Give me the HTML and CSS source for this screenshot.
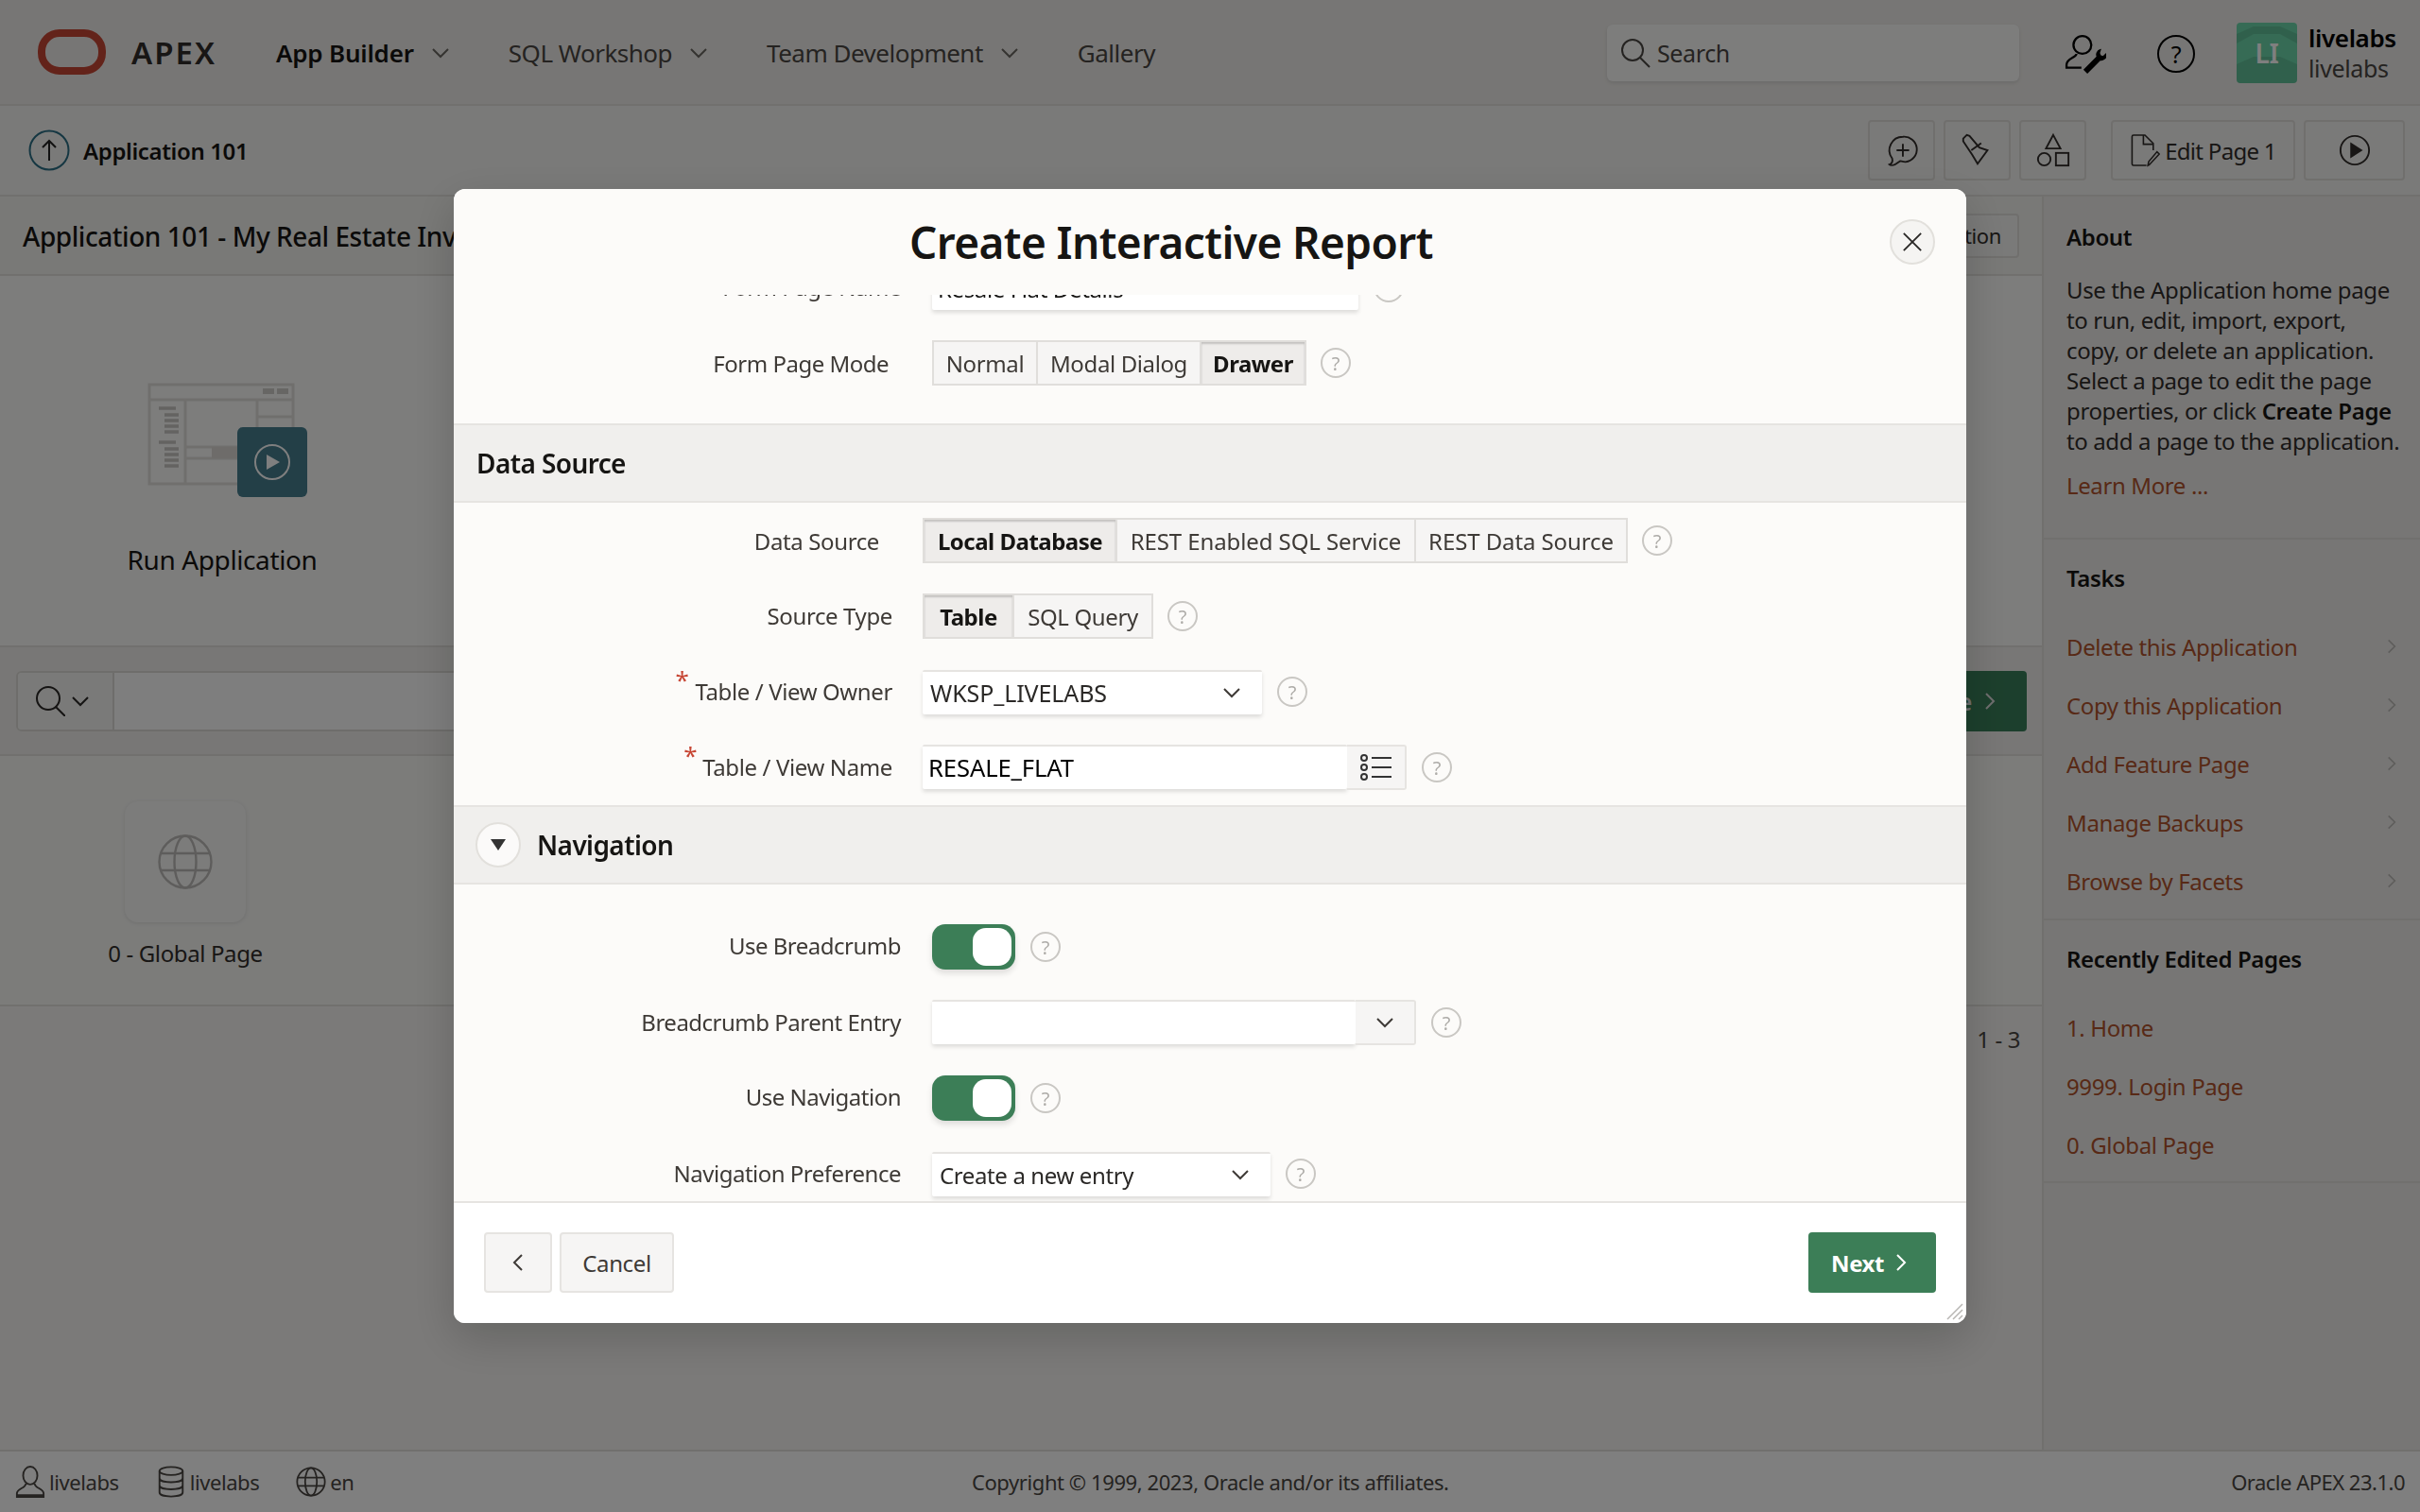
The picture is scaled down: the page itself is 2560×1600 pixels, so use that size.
FILE: index.html
```html
<!DOCTYPE html>
<html lang="en">
<head>
<meta charset="utf-8">
<title>Create Interactive Report</title>
<link rel="stylesheet" href="styles.css">
</head>
<body>
<svg class="defs" width="0" height="0">
  <symbol id="chev-down" viewBox="0 0 20 12"><path d="M2 2l8 8 8-8" fill="none" stroke="currentColor" stroke-width="2"/></symbol>
  <symbol id="chev-right" viewBox="0 0 12 20"><path d="M2 2l8 8-8 8" fill="none" stroke="currentColor" stroke-width="2"/></symbol>
  <symbol id="chev-left" viewBox="0 0 12 20"><path d="M10 2L2 10l8 8" fill="none" stroke="currentColor" stroke-width="2"/></symbol>
</svg>

<div class="page">
  <header class="topbar">
    <svg class="logo" viewBox="0 0 72 48"><rect x="4" y="4" width="64" height="40" rx="19" fill="none" stroke="#c74634" stroke-width="8"/></svg>
    <span class="brand">APEX</span>
    <nav class="mainnav">
      <a class="navitem active">App Builder<svg class="chev"><use href="#chev-down"/></svg></a>
      <a class="navitem">SQL Workshop<svg class="chev"><use href="#chev-down"/></svg></a>
      <a class="navitem">Team Development<svg class="chev"><use href="#chev-down"/></svg></a>
      <a class="navitem">Gallery</a>
    </nav>
    <div class="globalsearch">
      <svg class="icon32" viewBox="0 0 32 32" fill="none" stroke="currentColor" stroke-width="2"><circle cx="13" cy="13" r="11"/><path d="M21 21l10 10"/></svg>
      <span>Search</span>
    </div>
    <svg class="usertool" viewBox="0 0 42 42" fill="none" stroke="#000" stroke-width="2.2"><circle cx="18" cy="11" r="9"/><path d="M12 20c0 4-10 4-10 11v3h15"/><path d="M36 16a5 5 0 0 0-3 7l-13 13 3 3 13-13a5 5 0 0 0 6-6l-3 3-3-1-1-3z" fill="#000" stroke-width="1.4"/></svg>
    <div class="helpbig">?</div>
    <div class="avatar"><svg class="avatarart" viewBox="0 0 64 64"><path d="M0 12L18 4h28l18 8v10L46 12H18L0 22zM0 44l18-8h28l18 8v20H0z" fill="#000" opacity=".1"/></svg><span class="avatartext">LI</span></div>
    <div class="userinfo"><b>livelabs</b><span>livelabs</span></div>
  </header>

  <div class="crumbbar">
    <svg class="upicon" viewBox="0 0 44 44" fill="none"><circle cx="22" cy="22" r="20.5" stroke="#2b6e85" stroke-width="2"/><path d="M22 33V12M15 19l7-7 7 7" stroke="#222" stroke-width="2"/></svg>
    <span class="crumbtext">Application 101</span>
    <div class="toolgroup">
      <button class="toolbtn iconbtn"><svg viewBox="0 0 40 40" class="icon40" fill="none" stroke="currentColor" stroke-width="2"><path d="M21 5a14 14 0 0 1 3 28c-3 0-5-1-6-1l-6 4c-2 1-5 1-6 0 3-1 4-4 3-7a15 15 0 0 1 12-24z"/><path d="M21 13v14M14 20h14"/></svg></button>
      <button class="toolbtn iconbtn"><svg viewBox="0 0 40 40" class="icon40" fill="none" stroke="currentColor" stroke-width="2"><path d="M4 7l4-4 3 1 11 13 9 3-11 15-6-10-10-15z"/><path d="M13 20l11-8"/></svg></button>
      <button class="toolbtn iconbtn"><svg viewBox="0 0 40 40" class="icon40" fill="none" stroke="currentColor" stroke-width="2"><path d="M20 3l8 15H12z"/><circle cx="10" cy="30" r="7"/><rect x="23" y="23" width="14" height="14"/></svg></button>
      <button class="toolbtn editbtn"><svg viewBox="0 0 40 44" class="iconfile" fill="none" stroke="currentColor" stroke-width="2"><path d="M22 42H5a2 2 0 0 1-2-2V4a2 2 0 0 1 2-2h15l11 11v9"/><path d="M18 2v12h12"/><path d="M26 41l-2 1 1-5 11-13 3 3z"/></svg>Edit Page 1</button>
      <button class="toolbtn runbtn"><svg viewBox="0 0 36 36" class="icon36" fill="none" stroke="currentColor" stroke-width="2"><circle cx="18" cy="18" r="16"/><path d="M13 9l14 9-14 9z" fill="currentColor" stroke="none"/></svg></button>
    </div>
  </div>

  <div class="mainwrap">
    <main class="content">
      <div class="titlebar">
        <h1>Application 101 - My Real Estate Investment</h1>
        <button class="toolbtn defbtn">Edit Application Definition</button>
      </div>
      <section class="hero">
        <div class="herotile">
          <svg class="runart" viewBox="0 0 170 122">
            <rect x="2" y="2" width="152" height="105" fill="none" stroke="#e0dedb" stroke-width="3"/>
            <path d="M2 18h152M40 18v89M116 18v70M116 36h38M40 68h76M40 80h76" stroke="#e0dedb" stroke-width="3" fill="none"/>
            <rect x="122" y="6" width="12" height="6" fill="#cfccc8"/><rect x="137" y="6" width="12" height="6" fill="#cfccc8"/>
            <rect x="68" y="68" width="60" height="12" fill="#dcd9d5"/>
            <path d="M12 27h18M18 34h15M18 40h15M18 46h15M18 52h15M12 63h18M18 70h15M18 76h15M18 82h15M18 88h15" stroke="#c9c6c2" stroke-width="3.5"/>
            <rect x="95" y="47" width="74" height="74" rx="6" fill="#467e8e"/>
            <circle cx="132" cy="84" r="18" fill="none" stroke="#fff" stroke-width="2"/>
            <path d="M126 76l14 8-14 8z" fill="#fff"/>
          </svg>
          <div class="herolabel">Run Application</div>
        </div>
      </section>
      <div class="searchbar">
        <div class="searchctl">
          <div class="searchseg">
            <svg class="icon32" viewBox="0 0 32 32" fill="none" stroke="currentColor" stroke-width="2"><circle cx="14" cy="13" r="12"/><path d="M22 22l10 10"/></svg>
            <svg class="chevsm"><use href="#chev-down"/></svg>
          </div>
          <div class="searchinput"></div>
        </div>
        <button class="createbtn">Create Page<svg class="chevr"><use href="#chev-right"/></svg></button>
      </div>
      <div class="tiles">
        <div class="tile">
          <div class="tilebox"><svg class="globe" viewBox="0 0 58 58" fill="none" stroke="#bdbbb8" stroke-width="2.4"><circle cx="29" cy="29" r="27.5"/><ellipse cx="29" cy="29" rx="11.5" ry="27.5"/><path d="M4 20h50M4 38h50"/></svg></div>
          <div class="tilelabel">0 - Global Page</div>
        </div>
      </div>
      <div class="pager">1 - 3</div>
    </main>
    <aside class="side">
      <section class="sidesec aboutsec">
        <h3>About</h3>
        <p>Use the Application home page to run, edit, import, export, copy, or delete an application. Select a page to edit the page properties, or click <b>Create Page</b> to add a page to the application.</p>
        <a class="link learn">Learn More ...</a>
      </section>
      <section class="sidesec taskssec">
        <h3>Tasks</h3>
        <ul class="sidelist">
          <li><a class="link">Delete this Application</a><svg class="chevs"><use href="#chev-right"/></svg></li>
          <li><a class="link">Copy this Application</a><svg class="chevs"><use href="#chev-right"/></svg></li>
          <li><a class="link">Add Feature Page</a><svg class="chevs"><use href="#chev-right"/></svg></li>
          <li><a class="link">Manage Backups</a><svg class="chevs"><use href="#chev-right"/></svg></li>
          <li><a class="link">Browse by Facets</a><svg class="chevs"><use href="#chev-right"/></svg></li>
        </ul>
      </section>
      <section class="sidesec recentsec">
        <h3>Recently Edited Pages</h3>
        <ul class="sidelist">
          <li><a class="link">1. Home</a></li>
          <li><a class="link">9999. Login Page</a></li>
          <li><a class="link">0. Global Page</a></li>
        </ul>
      </section>
    </aside>
  </div>

  <footer class="footer">
    <div class="footleft">
      <span class="footitem"><svg class="footicon" viewBox="0 0 34 36" fill="none" stroke="currentColor" stroke-width="2"><ellipse cx="17" cy="11" rx="8" ry="10"/><path d="M12 20c0 5-10 6-10 11v4h30v-4c0-5-10-6-10-11M2 33h30"/></svg>livelabs</span>
      <span class="footitem"><svg class="footicon" viewBox="0 0 30 36" fill="none" stroke="currentColor" stroke-width="2"><ellipse cx="15" cy="6" rx="13" ry="4.5"/><path d="M2 6v24c0 6 26 6 26 0V6M2 14c0 6 26 6 26 0M2 22c0 6 26 6 26 0"/></svg>livelabs</span>
      <span class="footitem"><svg class="footicon" viewBox="0 0 36 36" fill="none" stroke="currentColor" stroke-width="2"><circle cx="18" cy="18" r="16.5"/><ellipse cx="18" cy="18" rx="7" ry="16.5"/><path d="M2 13h32M2 23h32"/></svg>en</span>
    </div>
    <div class="copy">Copyright © 1999, 2023, Oracle and/or its affiliates.</div>
    <div class="version">Oracle APEX 23.1.0</div>
  </footer>
</div>

<div class="overlay"></div>

<div class="modal" role="dialog">
  <div class="modalhead">
    <h2>Create Interactive Report</h2>
    <button class="closebtn"><svg viewBox="0 0 24 24" class="closeicon" fill="none" stroke="currentColor" stroke-width="2"><path d="M2 2l20 20M22 2L2 22"/></svg></button>
  </div>
  <div class="modalbody">
    <div class="scroller">
      <div class="fields fields-a">
        <div class="row col-506">
          <label class="lbl pr-33">Form Page Name</label>
          <div class="ctl"><div class="input w-451">Resale Flat Details</div><span class="help">?</span></div>
        </div>
        <div class="row col-506">
          <label class="lbl pr-46 drop">Form Page Mode</label>
          <div class="ctl">
            <div class="radio">
              <span class="opt w-111">Normal</span>
              <span class="opt w-173">Modal Dialog</span>
              <span class="opt on w-112">Drawer</span>
            </div>
            <span class="help">?</span>
          </div>
        </div>
      </div>

      <div class="sechead"><h4>Data Source</h4></div>
      <div class="fields fields-b">
        <div class="row col-496">
          <label class="lbl pr-46 drop">Data Source</label>
          <div class="ctl">
            <div class="radio">
              <span class="opt on w-205">Local Database</span>
              <span class="opt w-316 wide">REST Enabled SQL Service</span>
              <span class="opt w-225 wide">REST Data Source</span>
            </div>
            <span class="help">?</span>
          </div>
        </div>
        <div class="row col-496">
          <label class="lbl pr-32">Source Type</label>
          <div class="ctl">
            <div class="radio">
              <span class="opt on w-95">Table</span>
              <span class="opt w-149">SQL Query</span>
            </div>
            <span class="help">?</span>
          </div>
        </div>
        <div class="row col-496">
          <label class="lbl pr-32"><span class="req req-owner">*</span>Table / View Owner</label>
          <div class="ctl">
            <div class="select w-359 owner">WKSP_LIVELABS<svg class="chevsel"><use href="#chev-down"/></svg></div>
            <span class="help">?</span>
          </div>
        </div>
        <div class="row col-496">
          <label class="lbl pr-32"><span class="req">*</span>Table / View Name</label>
          <div class="ctl">
            <div class="joined">
              <div class="input w-449 dark">RESALE_FLAT</div>
              <span class="addon w-63"><svg class="listicon" viewBox="0 0 34 28" fill="none" stroke="#333" stroke-width="2"><circle cx="4" cy="4" r="3"/><circle cx="4" cy="14" r="3"/><circle cx="4" cy="24" r="3"/><path d="M12 4h21M12 14h21M12 24h21"/></svg></span>
            </div>
            <span class="help">?</span>
          </div>
        </div>
      </div>

      <div class="sechead">
        <button class="collapse"><svg class="tri" viewBox="0 0 16 12"><path d="M0 0h16L8 12z" fill="#333"/></svg></button>
        <h4>Navigation</h4>
      </div>
      <div class="fields fields-c">
        <div class="row col-506">
          <label class="lbl pr-33 lift">Use Breadcrumb</label>
          <div class="ctl"><span class="toggle"><span class="knob"></span></span><span class="help">?</span></div>
        </div>
        <div class="row col-506">
          <label class="lbl pr-33">Breadcrumb Parent Entry</label>
          <div class="ctl">
            <div class="joined">
              <div class="input w-448"></div>
              <span class="addon w-64"><svg class="chevadd"><use href="#chev-down"/></svg></span>
            </div>
            <span class="help">?</span>
          </div>
        </div>
        <div class="row col-506">
          <label class="lbl pr-33 lift">Use Navigation</label>
          <div class="ctl"><span class="toggle"><span class="knob"></span></span><span class="help">?</span></div>
        </div>
        <div class="row col-506">
          <label class="lbl pr-33">Navigation Preference</label>
          <div class="ctl">
            <div class="select w-358">Create a new entry<svg class="chevsel"><use href="#chev-down"/></svg></div>
            <span class="help">?</span>
          </div>
        </div>
      </div>
    </div>
  </div>
  <div class="modalfoot">
    <button class="btn backbtn"><svg class="chevl"><use href="#chev-left"/></svg></button>
    <button class="btn cancelbtn">Cancel</button>
    <button class="btn nextbtn">Next<svg class="chevn"><use href="#chev-right"/></svg></button>
  </div>
  <svg class="grip" viewBox="0 0 20 20" fill="none" stroke="#b8b6b3" stroke-width="1.5"><path d="M2 18L18 2M8 18L18 8M14 18l4-4"/></svg>
</div>
</body>
</html>
```

FILE: styles.css
```css
* { box-sizing: border-box; }
html, body { margin: 0; padding: 0; height: 100%; }
body { font-family: "Noto Sans", "Open Sans", sans-serif; font-size: 24px; letter-spacing: -.38px; color: #2a2826; overflow: hidden; background: #f6f5f2; }
.defs { position: absolute; }
h1, h2, h3, h4, p, ul { margin: 0; padding: 0; font-weight: 400; }
button { font: inherit; letter-spacing: inherit; color: inherit; padding: 0; cursor: default; }
svg { display: block; flex: none; }

.page { width: 2560px; height: 1600px; display: flex; flex-direction: column; }

/* header */
.topbar { height: 112px; flex: none; display: flex; align-items: center; background: #efedea; border-bottom: 2px solid #e2e0dc; padding-left: 40px; }
.logo { width: 72px; height: 48px; }
.brand { margin-left: 27px; width: 153px; font-size: 33px; font-weight: 600; letter-spacing: 2px; color: #312d2a; }
.mainnav { display: flex; align-items: center; padding-top: 2px; }
.navitem { display: flex; align-items: center; font-size: 26px; letter-spacing: -.5px; color: #4a4642; margin-right: 62px; white-space: nowrap; }
.navitem.active { font-weight: 600; letter-spacing: -.2px; color: #161513; }
.chev { width: 20px; height: 12px; margin-left: 18px; color: #6b6762; }
.globalsearch { position: absolute; left: 1700px; top: 26px; width: 436px; height: 60px; border-radius: 6px; background: #fafaf9; box-shadow: 0 2px 4px rgba(0,0,0,.1); display: flex; align-items: center; padding-left: 14px; gap: 7px; color: #4a4642; font-size: 25px; }
.icon32 { width: 32px; height: 32px; }
.usertool { position: absolute; left: 2184px; top: 36px; width: 44px; height: 44px; }
.helpbig { position: absolute; left: 2282px; top: 37px; width: 40px; height: 40px; border: 2.4px solid #000; border-radius: 50%; display: flex; align-items: center; justify-content: center; color: #000; font-size: 25px; }
.avatar { position: absolute; left: 2366px; top: 24px; width: 64px; height: 64px; border-radius: 4px; background: #6cd6aa; color: #fff; display: flex; align-items: center; justify-content: center; font-size: 28px; font-weight: 600; overflow: hidden; }
.avatarart { position: absolute; inset: 0; width: 64px; height: 64px; }
.avatartext { position: relative; }
.userinfo { position: absolute; left: 2442px; top: 24px; display: flex; flex-direction: column; line-height: 32px; font-size: 26px; }
.userinfo b { font-weight: 600; color: #000; }
.userinfo span { color: #4a4642; font-size: 25px; }

/* breadcrumb bar */
.crumbbar { height: 96px; flex: none; display: flex; align-items: center; padding: 0 16px 0 30px; background: #f5f4f2; border-bottom: 2px solid #e2e0dc; }
.upicon { width: 44px; height: 44px; }
.crumbtext { margin-left: 14px; font-size: 24px; font-weight: 600; color: #161513; }
.toolgroup { margin-left: auto; display: flex; align-items: center; gap: 9px; }
.toolbtn { height: 64px; background: #f5f4f2; border: 2px solid #e0dedb; border-radius: 4px; display: flex; align-items: center; justify-content: center; color: #312d2a; font-size: 24px; }
.iconbtn { width: 71px; }
.icon40 { width: 38px; height: 40px; }
.iconfile { width: 32px; height: 38px; }
.icon36 { width: 34px; height: 34px; }
.editbtn { width: 195px; margin-left: 17px; gap: 5px; letter-spacing: -.7px; }
.runbtn { width: 107px; }

/* content */
.mainwrap { flex: 1; display: flex; min-height: 0; }
.content { flex: 1; position: relative; min-width: 0; }
.titlebar { height: 84px; display: flex; align-items: center; justify-content: space-between; padding: 0 24px; border-bottom: 2px solid #e2e0dc; background: #f3f2ef; }
.titlebar h1 { font-size: 28px; font-weight: 500; letter-spacing: -.45px; color: #161513; white-space: nowrap; margin-top: 2px; }
.defbtn { height: 47px; padding: 0 17px; font-size: 22px; }
.hero { height: 393px; border-bottom: 2px solid #e2e0dc; background: #fbfbf9; display: flex; }
.herotile { width: 470px; display: flex; flex-direction: column; align-items: center; padding-top: 113px; }
.runart { width: 170px; height: 122px; margin-left: 12px; }
.herolabel { margin-top: 46px; font-size: 28px; letter-spacing: -.4px; color: #161513; }
.searchbar { height: 115px; display: flex; justify-content: space-between; align-items: flex-start; padding: 25px 16px 0 17px; background: #f0efec; border-bottom: 2px solid #e2e0dc; }
.searchctl { width: 1200px; height: 64px; border: 2px solid #dcdad6; border-radius: 6px; display: flex; background: #fdfdfc; overflow: hidden; }
.searchseg { width: 102px; border-right: 2px solid #dcdad6; background: #f5f4f2; display: flex; align-items: center; padding-left: 18px; gap: 6px; color: #2a2826; }
.chevsm { width: 20px; height: 12px; }
.createbtn { height: 64px; width: 260px; background: #397f5a; color: #ddd; border: 0; border-radius: 4px; font-size: 25px; font-weight: 600; display: flex; align-items: center; justify-content: flex-end; padding-right: 33px; gap: 13px; }
.chevr { width: 12px; height: 20px; }
.tiles { height: 265px; border-bottom: 2px solid #e2e0dc; background: #f8f8f5; display: flex; padding-top: 48px; padding-left: 112px; }
.tile { width: 168px; display: flex; flex-direction: column; align-items: center; }
.tilebox { width: 128px; height: 128px; border-radius: 14px; background: #f8f8f6; box-shadow: 0 1px 4px rgba(0,0,0,.1); display: flex; align-items: center; justify-content: center; }
.globe { width: 58px; height: 58px; }
.tilelabel { margin-top: 16px; font-size: 24px; white-space: nowrap; color: #312d2a; }
.pager { position: absolute; right: 23px; top: 875px; font-size: 24px; color: #4a4642; }
.side { width: 400px; flex: none; background: #efedea; border-left: 2px solid #e2e0dc; }
.sidesec { padding: 0 16px 0 24px; border-bottom: 2px solid #e2e0dc; }
.aboutsec { height: 363px; padding-top: 26px; }
.taskssec { height: 403px; padding-top: 24px; }
.recentsec { height: 278px; padding-top: 24px; }
.side h3 { font-size: 24px; font-weight: 600; color: #161513; }
.side p { margin-top: 24px; max-width: 354px; font-size: 24px; line-height: 32px; color: #312d2a; }
.side p b { font-weight: 600; color: #161513; }
.link { color: #b0522c; font-size: 24px; }
.learn { display: block; margin-top: 14px; }
.sidelist { list-style: none; margin-top: 25px; }
.sidelist li { height: 62px; display: flex; align-items: center; justify-content: space-between; }
.chevs { width: 10px; height: 18px; color: #bdbbb8; margin-right: 9px; }

/* footer */
.footer { height: 66px; flex: none; position: relative; display: flex; align-items: center; padding: 0 16px; background: #fff; border-top: 2px solid #e2e0dc; font-size: 22px; letter-spacing: -.42px; color: #4a4642; }
.footleft { display: flex; gap: 39px; }
.footitem { display: flex; align-items: center; gap: 4px; }
.footicon { width: 32px; height: 34px; }
.copy { position: absolute; left: 1028px; top: 0; bottom: 0; display: flex; align-items: center; }
.version { margin-left: auto; letter-spacing: -.5px; }

/* overlay + modal */
.overlay { position: fixed; inset: 0; background: rgba(0,0,0,.5); }
.modal { position: fixed; left: 480px; top: 200px; width: 1600px; height: 1200px; border-radius: 12px; overflow: hidden; background: #fff; box-shadow: 0 16px 48px rgba(0,0,0,.18); display: flex; flex-direction: column; }
.modalhead { height: 112px; flex: none; background: #fcfbf9; display: flex; align-items: center; position: relative; padding-left: 482px; }
.modalhead h2 { font-size: 46px; font-weight: 600; letter-spacing: -.6px; color: #161513; white-space: nowrap; }
.closebtn { position: absolute; left: 1519px; top: 32px; width: 48px; height: 48px; border-radius: 50%; background: #f5f4f2; border: 2px solid #e2e0dc; display: flex; align-items: center; justify-content: center; color: #2a2826; }
.closeicon { width: 22px; height: 22px; }
.modalbody { flex: none; height: 961px; overflow: hidden; background: #fcfbf9; border-bottom: 2px solid #e6e4e1; }
.scroller { margin-top: -32px; }
.fields { display: flex; flex-direction: column; gap: 32px; }
.fields-a { padding-bottom: 40px; }
.fields-a .lbl, .fields-c .lbl { letter-spacing: -.5px; }
.fields-b { padding: 16px 0; }
.fields-c { padding: 42px 0 0; }
.row { display: flex; height: 48px; align-items: center; }
.col-506 .lbl { width: 506px; }
.col-496 .lbl { width: 496px; }
.lbl { text-align: right; color: #3e3a36; white-space: nowrap; flex: none; line-height: 32px; }
.lbl.drop { padding-top: 2px; }
.lbl.lift { padding-bottom: 2px; }
.pr-33 { padding-right: 33px; }
.pr-46 { padding-right: 46px; }
.pr-32 { padding-right: 32px; }
.req { color: #c74634; font-size: 26px; line-height: 0; vertical-align: 12px; margin-right: 6px; }
.req-owner { margin-right: 7px; }
.ctl { display: flex; align-items: center; }
.input { height: 47px; background: #fff; border-top: 2px solid #e6e4e1; padding: 0 6px; display: flex; align-items: center; box-shadow: 0 3px 4px rgba(0,0,0,.12); border-radius: 2px; color: #161513; }
.input.dark { color: #000; font-size: 25.6px; letter-spacing: -.1px; }
.select { height: 47px; background: #fff; border-top: 2px solid #e6e4e1; padding: 0 8px; display: flex; align-items: center; justify-content: space-between; box-shadow: 0 3px 4px rgba(0,0,0,.12); border-radius: 2px; color: #2a2826; }
.select.owner { font-size: 25px; letter-spacing: -.1px; }
.chevsel { width: 20px; height: 12px; margin-right: 14px; color: #3e3a36; }
.w-451 { width: 451px; }
.w-359 { width: 359px; }
.w-358 { width: 358px; }
.w-449 { width: 449px; }
.w-448 { width: 448px; }
.help { margin-left: 16px; width: 32px; height: 32px; border: 2px solid #c9c7c3; border-radius: 50%; display: flex; align-items: center; justify-content: center; font-size: 20px; color: #aeaca8; flex: none; }
.radio + .help { margin-left: 15px; }
.radio { display: flex; height: 48px; border: 2px solid #e0dedb; background: #f6f5f4; }
.opt { display: flex; align-items: center; justify-content: center; color: #3e3a36; border-right: 2px solid #e0dedb; white-space: nowrap; }
.opt:last-child { border-right: 0; }
.opt.wide { letter-spacing: -.1px; }
.opt.on { background: #eeecea; font-weight: 700; letter-spacing: -.5px; color: #161513; box-shadow: inset 0 2px 2px rgba(0,0,0,.18); }
.w-111 { width: 110px; }
.w-173 { width: 173px; }
.w-112 { width: 109px; }
.w-205 { width: 204px; }
.w-316 { width: 316px; }
.w-225 { width: 222px; }
.w-95 { width: 95px; }
.w-149 { width: 145px; }
.joined { display: flex; }
.addon { height: 48px; display: flex; align-items: center; justify-content: center; background: #f6f5f4; border: 2px solid #e6e4e1; border-left: 0; border-radius: 0 3px 3px 0; }
.w-63 { width: 63px; }
.w-64 { width: 64px; }
.listicon { width: 34px; height: 28px; }
.chevadd { width: 20px; height: 12px; color: #3e3a36; }
.sechead { height: 84px; display: flex; align-items: center; background: #f0efed; border-top: 2px solid #e6e4e1; border-bottom: 2px solid #e6e4e1; padding-left: 24px; }
.sechead h4 { font-size: 28px; font-weight: 600; letter-spacing: -.6px; color: #161513; }
.collapse { width: 48px; height: 48px; border-radius: 50%; background: #fbfaf9; border: 2px solid #e2e0dc; display: flex; align-items: center; justify-content: center; margin-right: 17px; margin-left: -1px; }
.tri { width: 16px; height: 12px; }
.toggle { width: 88px; height: 48px; border-radius: 14px; background: #3c7e57; display: flex; justify-content: flex-end; align-items: center; padding-right: 4px; box-shadow: 0 4px 6px rgba(0,0,0,.12); }
.knob { width: 41px; height: 40px; background: #fff; border-radius: 14px; }
.modalfoot { flex: 1; background: #fff; display: flex; align-items: flex-start; padding: 31px 32px 0; gap: 8px; }
.btn { height: 64px; border-radius: 4px; border: 2px solid #e6e4e1; background: #f6f5f4; color: #3e3a36; display: flex; align-items: center; justify-content: center; font-size: 24px; }
.backbtn { width: 72px; }
.cancelbtn { width: 121px; }
.chevl { width: 12px; height: 20px; color: #3e3a36; }
.nextbtn { margin-left: auto; width: 135px; background: #3c7e57; border: 0; color: #fff; font-weight: 700; gap: 12px; justify-content: flex-start; padding-left: 24px; }
.chevn { width: 12px; height: 20px; color: #fff; }
.grip { position: absolute; right: 2px; bottom: 2px; width: 20px; height: 20px; }
```
